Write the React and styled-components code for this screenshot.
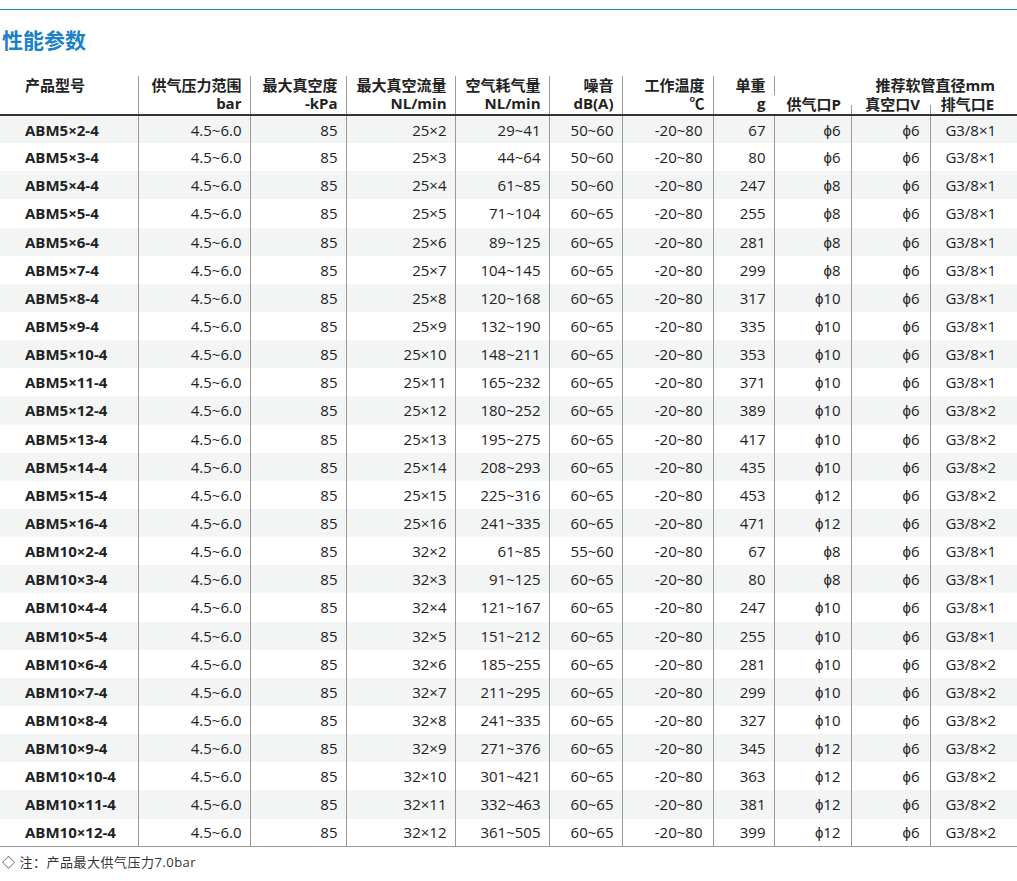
import React from "react";
import styled, { createGlobalStyle } from "styled-components";

const G = createGlobalStyle`
  body { margin: 0; background: #fff; font-family: "Open Sans", "Noto Sans CJK SC", sans-serif; color: #222; }
`;
const Page = styled.div` width: 1017px; padding-top: 9px; `;
const TopLine = styled.div` height: 1px; background: #1f82c4; `;
const Title = styled.h2` margin: 14px 0 0 2px; font-size: 21px; font-weight: 700; color: #1a82c8; line-height: 30px; font-family: "Noto Sans CJK SC", sans-serif; `;
const Table = styled.table`
  margin-top: 22px; width: 1017px; table-layout: fixed; border-collapse: collapse; font-size: 15px;
`;
const Th = styled.th`
  font-weight: 700; text-align: ${p => p.$align || "right"}; vertical-align: top;
  padding: 0 ${p => p.$pr ?? 8}px 0 ${p => p.$pl ?? 8}px; line-height: 18px; height: 19px;
  border-left: ${p => (p.$nob ? "none" : "1px solid #9a9a9a")}; white-space: nowrap;
  ${p => p.$half && `border-left:none; background: linear-gradient(#9a9a9a,#9a9a9a) no-repeat left bottom / 1px 9px;`}
`;
const Row = styled.tr` background: ${p => (p.$odd ? "#f3f5f5" : "#fff")}; height: 28.15px; `;
const Td = styled.td`
  text-align: ${p => p.$align || "right"}; padding: 0 ${p => p.$pr ?? 8}px 0 ${p => p.$pl ?? 8}px;
  border-left: ${p => (p.$first ? "none" : "1px solid #9a9a9a")};
  font-weight: ${p => (p.$bold ? 700 : 400)}; white-space: nowrap; line-height: 20px;
`;
const Body = styled.tbody`
  tr:first-child td { border-top: 2px solid #333; }
  tr:last-child td { border-bottom: 1px solid #9a9a9a; }
`;
const Note = styled.div` margin: 5px 0 0 2px; font-size: 13px; color: #333; letter-spacing: 0.5px; `;

const raw = `ABM5×2-4,25×2,29~41,50~60,67,ϕ6,G3/8×1
ABM5×3-4,25×3,44~64,50~60,80,ϕ6,G3/8×1
ABM5×4-4,25×4,61~85,50~60,247,ϕ8,G3/8×1
ABM5×5-4,25×5,71~104,60~65,255,ϕ8,G3/8×1
ABM5×6-4,25×6,89~125,60~65,281,ϕ8,G3/8×1
ABM5×7-4,25×7,104~145,60~65,299,ϕ8,G3/8×1
ABM5×8-4,25×8,120~168,60~65,317,ϕ10,G3/8×1
ABM5×9-4,25×9,132~190,60~65,335,ϕ10,G3/8×1
ABM5×10-4,25×10,148~211,60~65,353,ϕ10,G3/8×1
ABM5×11-4,25×11,165~232,60~65,371,ϕ10,G3/8×1
ABM5×12-4,25×12,180~252,60~65,389,ϕ10,G3/8×2
ABM5×13-4,25×13,195~275,60~65,417,ϕ10,G3/8×2
ABM5×14-4,25×14,208~293,60~65,435,ϕ10,G3/8×2
ABM5×15-4,25×15,225~316,60~65,453,ϕ12,G3/8×2
ABM5×16-4,25×16,241~335,60~65,471,ϕ12,G3/8×2
ABM10×2-4,32×2,61~85,55~60,67,ϕ8,G3/8×1
ABM10×3-4,32×3,91~125,60~65,80,ϕ8,G3/8×1
ABM10×4-4,32×4,121~167,60~65,247,ϕ10,G3/8×1
ABM10×5-4,32×5,151~212,60~65,255,ϕ10,G3/8×1
ABM10×6-4,32×6,185~255,60~65,281,ϕ10,G3/8×2
ABM10×7-4,32×7,211~295,60~65,299,ϕ10,G3/8×2
ABM10×8-4,32×8,241~335,60~65,327,ϕ10,G3/8×2
ABM10×9-4,32×9,271~376,60~65,345,ϕ12,G3/8×2
ABM10×10-4,32×10,301~421,60~65,363,ϕ12,G3/8×2
ABM10×11-4,32×11,332~463,60~65,381,ϕ12,G3/8×2
ABM10×12-4,32×12,361~505,60~65,399,ϕ12,G3/8×2`.split("\n").map(l => l.split(","));

const widths = [138, 112, 96, 109, 94, 73, 91, 61, 77, 79, 87];

export default function App() {
  return (
    <Page>
      <G />
      <TopLine />
      <Title>性能参数</Title>
      <Table>
        <colgroup>{widths.map((w, i) => <col key={i} style={{ width: w }} />)}</colgroup>
        <thead>
          <tr>
            <Th rowSpan={2} $nob $align="left" $pl={25}>产品型号</Th>
            <Th rowSpan={2}>供气压力范围<br />bar</Th>
            <Th rowSpan={2}>最大真空度<br />-kPa</Th>
            <Th rowSpan={2}>最大真空流量<br />NL/min</Th>
            <Th rowSpan={2}>空气耗气量<br />NL/min</Th>
            <Th rowSpan={2}>噪音<br />dB(A)</Th>
            <Th rowSpan={2}>工作温度<br />℃</Th>
            <Th rowSpan={2}>单重<br />g</Th>
            <Th colSpan={3} $pr={22}>推荐软管直径mm</Th>
          </tr>
          <tr>
            <Th $nob $pr={10}>供气口P</Th>
            <Th $half $pr={10}>真空口V</Th>
            <Th $half $align="center" $pl={2} $pr={14}>排气口E</Th>
          </tr>
        </thead>
        <Body>
          {raw.map((r, i) => (
            <Row key={i} $odd={i % 2 === 0}>
              <Td $first $bold $align="left" $pl={25}>{r[0]}</Td>
              <Td>4.5~6.0</Td>
              <Td>85</Td>
              <Td>{r[1]}</Td>
              <Td>{r[2]}</Td>
              <Td>{r[3]}</Td>
              <Td $pr={10}>-20~80</Td>
              <Td>{r[4]}</Td>
              <Td $pr={10}>{r[5]}</Td>
              <Td $pr={10}>ϕ6</Td>
              <Td $align="center" $pl={2} $pr={8}>{r[6]}</Td>
            </Row>
          ))}
        </Body>
      </Table>
      <Note>◇ 注：产品最大供气压力7.0bar</Note>
    </Page>
  );
}
